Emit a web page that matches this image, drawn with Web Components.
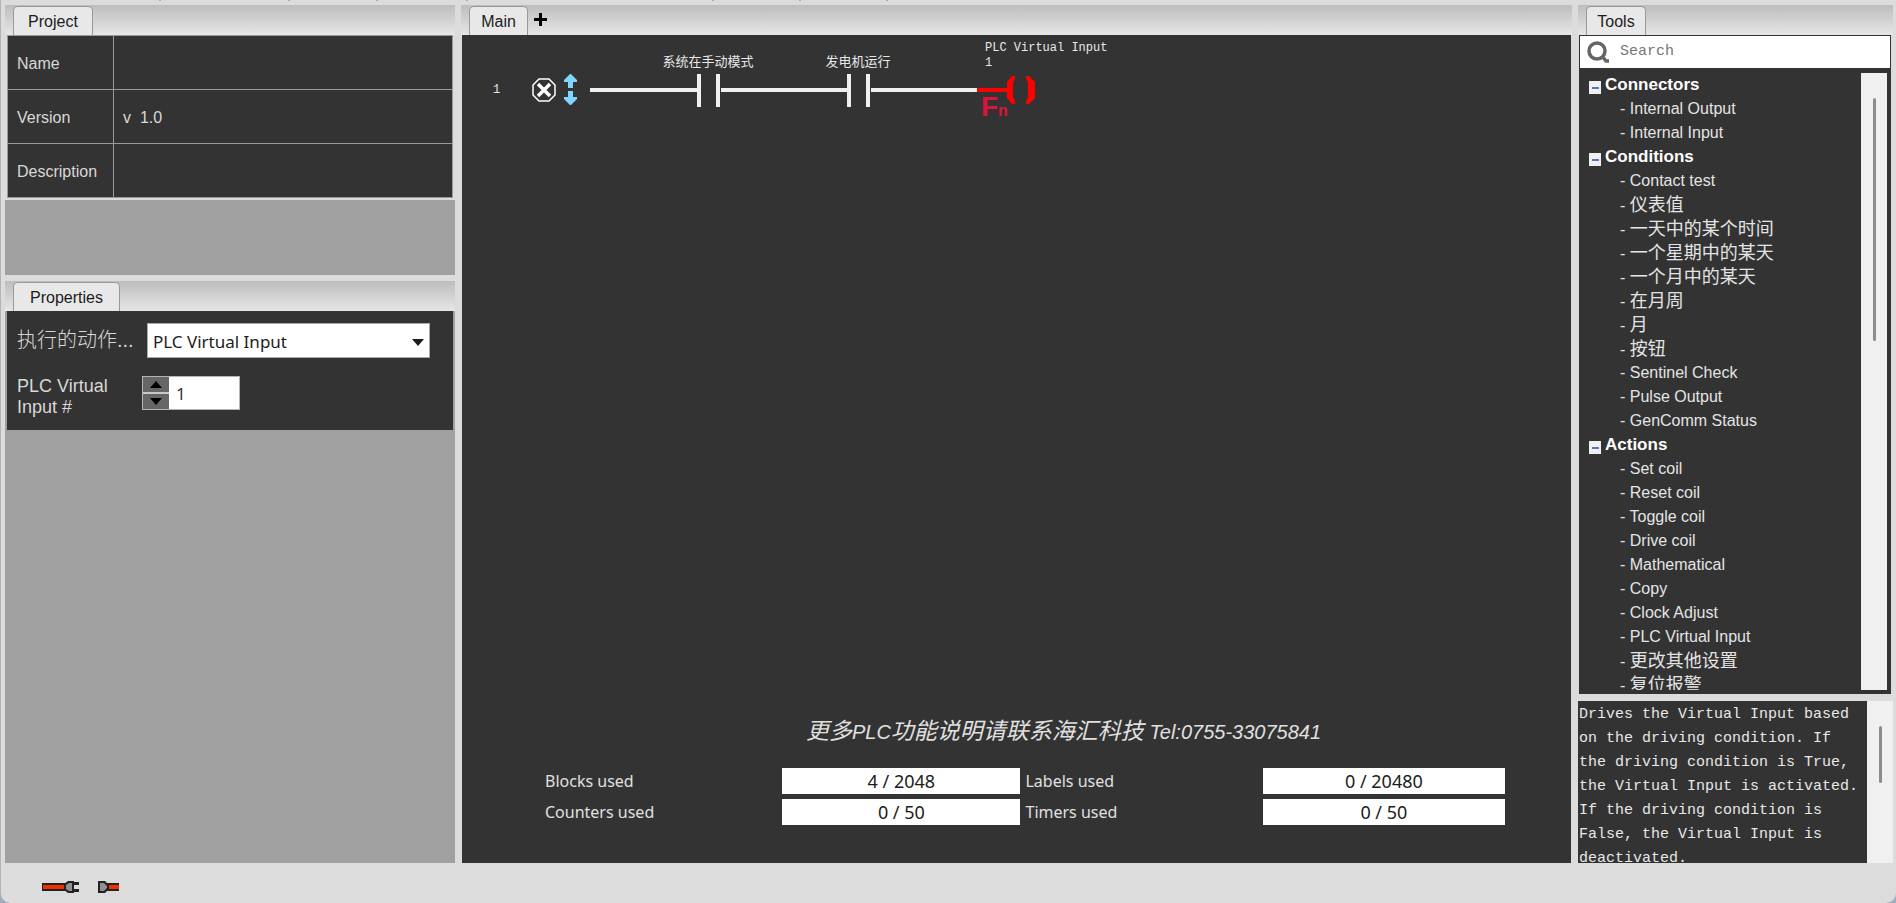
<!DOCTYPE html>
<html lang="zh-CN">
<head>
<meta charset="utf-8">
<title>PLC Editor</title>
<style>
  html, body {
    margin: 0;
    height: 100%;
    background: #9fadc0;
    font: 16px/24px "Liberation Sans", "Noto Sans CJK SC", sans-serif;
  }
</style>
</head>
<body>
<plc-app></plc-app>

<script>
class PlcPanel extends HTMLElement {
  constructor() {
    super();
    this.attachShadow({ mode: "open" });
    this.shadowRoot.innerHTML = `
      <style>
        :host {
          display: flex;
          flex-direction: column;
          min-width: 0;
          min-height: 0;
        }
        header {
          display: flex;
          flex: none;
          box-sizing: border-box;
          height: 30px;
          padding: 1px 8px 0;
          background: linear-gradient(#bdbdbd, #e6e6e6);
        }
        .tab {
          box-sizing: border-box;
          width: var(--tab-width, 80px);
          padding: 2px 0 0;
          border: 1px solid #999;
          border-bottom: 0;
          border-radius: 5px 5px 0 0;
          background: #e8e8e8;
          color: #1c1c1c;
          font: inherit;
        }
      </style>
      <header>
        <button class="tab" type="button">${this.getAttribute("label")}</button>
        <slot name="actions"></slot>
      </header>
      <slot></slot>
    `;
  }
}

class PlcProject extends HTMLElement {
  constructor() {
    super();
    this.attachShadow({ mode: "open" });
    this.shadowRoot.innerHTML = `
      <style>
        :host {
          display: block;
          padding: 0 2px 2px;
          background: #dcdcdc;
        }
        table {
          width: 100%;
          border-collapse: collapse;
          background: #333;
          color: #d8d8d8;
        }
        th, td {
          box-sizing: border-box;
          height: 54px;
          padding: 2px 9px 0;
          border: 1px solid #999;
          font-weight: normal;
          text-align: left;
          white-space: pre;
        }
        th { width: 106px; }
      </style>
      <table>
        <tr><th scope="row">Name</th><td></td></tr>
        <tr><th scope="row">Version</th><td>v  1.0</td></tr>
        <tr><th scope="row">Description</th><td></td></tr>
      </table>
    `;
  }
}

class PlcProperties extends HTMLElement {
  #input = null;

  constructor() {
    super();
    this.attachShadow({ mode: "open" });
    this.shadowRoot.innerHTML = `
      <style>
        :host {
          display: block;
          margin: 0 2px;
          padding: 12px 23px 12px 10px;
          background: #333;
          color: #d8d8d8;
          font-size: 18px;
          line-height: 21px;
        }
        .row {
          display: flex;
          align-items: center;
        }
        .row + .row { align-items: flex-start; margin-top: 18px; }
        .action { flex: none; width: 130px; font-size: 20px; font-weight: 300; }
        .number { flex: none; width: 100px; margin-right: 25px; }
        .select {
          display: grid;
          flex: 1;
          align-items: center;
          background: #fff;
          border: 1px solid #aaa;
        }
        select {
          grid-area: 1 / 1;
          height: 33px;
          padding: 2px 5px 0;
          border: 0;
          background: none;
          appearance: none;
          color: #1c1c1c;
          font: 17px "Noto Sans", sans-serif;
        }
        .select svg { grid-area: 1 / 1; justify-self: end; margin: 4px 5px 0 0; }
        .spinner {
          display: flex;
          border: 1px solid #b4b4b4;
          background: #c8c8c8;
        }
        .steps {
          display: grid;
          gap: 2px;
          width: 26px;
        }
        .steps button {
          display: grid;
          place-items: center;
          height: 15px;
          padding: 0;
          border: 0;
          background: #666;
        }
        input {
          box-sizing: border-box;
          width: 70px;
          height: 32px;
          padding: 0 7px;
          border: 0;
          background: #fff;
          color: #333;
          font: 17px "Noto Sans", sans-serif;
        }
      </style>
      <div class="row">
        <label class="action" for="action">执行的动作...</label>
        <div class="select">
          <select id="action"><option>PLC Virtual Input</option></select>
          <svg width="12" height="7"><path d="M0 0h12L6 7z" fill="#1c1c1c"/></svg>
        </div>
      </div>
      <div class="row">
        <label class="number" for="number">PLC Virtual Input #</label>
        <div class="spinner">
          <div class="steps">
            <button type="button" data-step="1" aria-label="Up"><svg width="12" height="7"><path d="M0 7h12L6 0z"/></svg></button>
            <button type="button" data-step="-1" aria-label="Down"><svg width="12" height="7"><path d="M0 0h12L6 7z"/></svg></button>
          </div>
          <input id="number" type="text" value="1">
        </div>
      </div>
    `;
  }

  connectedCallback() {
    this.#input = this.shadowRoot.querySelector("input");
    this.shadowRoot.querySelector(".steps").addEventListener("click", this.#step);
  }

  #step = (event) => {
    const button = event.target.closest("button");
    if (button) {
      this.#input.value = Number(this.#input.value) + Number(button.dataset.step);
    }
  };
}

class PlcRung extends HTMLElement {
  constructor() {
    super();
    this.attachShadow({ mode: "open" });
    this.shadowRoot.innerHTML = `
      <style>
        :host {
          display: flex;
          align-items: center;
          height: 109px;
          padding-left: 31px;
          color: #e8e8e8;
          font: 12px/16px "Liberation Mono", "Noto Sans CJK SC", monospace;
        }
        .index { width: 39px; }
        button {
          display: block;
          padding: 0;
          border: 0;
          background: none;
        }
        svg { display: block; }
        .move { display: grid; gap: 3px; margin: 0 13px 0 8px; }
        text { fill: #e8e8e8; }
        .cjk { font-size: 13px; }
        .fn { fill: #dc143c; font: bold 28px "Liberation Sans", sans-serif; }
        .fn .small { font-size: 16px; }
      </style>
      <span class="index">1</span>
      <button type="button" aria-label="Delete">
        <svg width="24" height="24" fill="none" stroke="#fff">
          <path d="M7 1h10l6 6v10l-6 6H7l-6-6V7z" stroke-width="1.5"/>
          <path d="M6 6l12 12M18 6L6 18" stroke-width="3.5"/>
        </svg>
      </button>
      <div class="move">
        <button type="button" aria-label="Move up"><svg width="13" height="14"><path d="M6 0h1l6 6v2H9v6H4V8H0V6z" fill="#7fd6ff"/></svg></button>
        <button type="button" aria-label="Move down"><svg width="13" height="14"><path d="M6 14h1l6-6V6H9V0H4v6H0v2z" fill="#7fd6ff"/></svg></button>
      </div>
      <svg width="540" height="109">
        <g fill="#f0f0f0">
          <path d="M0 53h107v4H0zM131 53h126v4H131zM281 53h106v4H281z"/>
          <path d="M107 39h4v33h-4zM126 39h4v33h-4zM257 39h4v33h-4zM276 39h4v33h-4z"/>
        </g>
        <path d="M387 53h30v-6l5-6h3v3l-2 4v14l2 4v3h-3l-5-6v-6h-30zM436 41h3l6 6v16l-6 6h-3v-3l2-4V48l-2-4z" fill="#f00"/>
        <text class="cjk" x="118" y="31" text-anchor="middle">系统在手动模式</text>
        <text class="cjk" x="268" y="31" text-anchor="middle">发电机运行</text>
        <text x="395" y="16">PLC Virtual Input</text>
        <text x="395" y="31">1</text>
        <text class="fn" x="391" y="81">F<tspan class="small">n</tspan></text>
      </svg>
    `;
  }
}

class PlcUsage extends HTMLElement {
  constructor() {
    super();
    this.attachShadow({ mode: "open" });
    this.shadowRoot.innerHTML = `
      <style>
        :host {
          display: grid;
          grid-template-columns: 237fr 238fr 242fr 242fr;
          row-gap: 5px;
          align-items: center;
          padding: 0 66px 38px 83px;
          color: #e0e0e0;
          font: 16px/26px "Noto Sans", sans-serif;
        }
        output {
          background: #fff;
          color: #1c1c1c;
          font-size: 18px;
          text-align: center;
        }
        .second { padding-left: 5px; }
      </style>
      <label for="blocks">Blocks used</label><output id="blocks">4 / 2048</output>
      <label for="labels" class="second">Labels used</label><output id="labels">0 / 20480</output>
      <label for="counters">Counters used</label><output id="counters">0 / 50</output>
      <label for="timers" class="second">Timers used</label><output id="timers">0 / 50</output>
    `;
  }
}

class PlcCanvas extends HTMLElement {
  constructor() {
    super();
    this.attachShadow({ mode: "open" });
    this.shadowRoot.innerHTML = `
      <style>
        :host {
          display: flex;
          flex: 1;
          flex-direction: column;
          margin: 0 1px;
          background: #333;
        }
        p {
          margin: auto 0 20px;
          padding-left: 94px;
          color: #e0e0e0;
          font-size: 20px;
          font-style: italic;
          line-height: 32px;
          text-align: center;
        }
        .cjk { font-size: 23px; }
      </style>
      <plc-rung></plc-rung>
      <p><span class="cjk">更多</span>PLC<span class="cjk">功能说明请联系海汇科技</span> Tel:0755-33075841</p>
      <plc-usage></plc-usage>
    `;
  }
}

class PlcScrollbar extends HTMLElement {
  constructor() {
    super();
    this.attachShadow({ mode: "open" });
    this.shadowRoot.innerHTML = `
      <style>
        :host {
          display: block;
          flex: none;
          box-sizing: border-box;
          width: 26px;
          padding-top: 25px;
          background: #f0f0f0;
        }
        div {
          width: 3px;
          height: var(--thumb, 41%);
          margin: 0 auto;
          border-radius: 2px;
          background: #8c8c8c;
        }
      </style>
      <div></div>
    `;
  }
}

const TOOLS = {
  Connectors: ["Internal Output", "Internal Input"],
  Conditions: [
    "Contact test", "仪表值", "一天中的某个时间", "一个星期中的某天", "一个月中的某天",
    "在月周", "月", "按钮", "Sentinel Check", "Pulse Output", "GenComm Status",
  ],
  Actions: [
    "Set coil", "Reset coil", "Toggle coil", "Drive coil", "Mathematical", "Copy",
    "Clock Adjust", "PLC Virtual Input", "更改其他设置", "复位报警",
  ],
};

class PlcTools extends HTMLElement {
  constructor() {
    super();
    this.attachShadow({ mode: "open" });
    this.shadowRoot.innerHTML = `
      <style>
        :host {
          display: flex;
          flex: 1;
          flex-direction: column;
          min-height: 0;
          margin: 0 2px 0 1px;
          padding: 1px 1px 4px;
          background: #333;
          color: #e4e4e4;
        }
        .search {
          display: flex;
          flex: none;
          align-items: center;
          gap: 9px;
          height: 32px;
          padding-left: 7px;
          background: #fff;
        }
        input {
          flex: 1;
          min-width: 0;
          height: 24px;
          margin-bottom: 2px;
          padding: 0;
          border: 0;
          outline: 0;
          font: 15px "Liberation Mono", monospace;
        }
        input::placeholder { color: #777; }
        .body {
          display: flex;
          flex: 1;
          min-height: 0;
          margin: 5px 3px 0 9px;
        }
        .tree { flex: 1; overflow: hidden; }
        summary {
          display: flex;
          align-items: center;
          gap: 4px;
          color: #fff;
          font-size: 17px;
          font-weight: bold;
          list-style: none;
        }
        summary svg { margin-top: 4px; }
        ul { margin: 0; padding: 0 0 0 31px; list-style: none; }
        li { height: 24px; white-space: nowrap; }
        .cjk { font-size: 18px; }
      </style>
      <div class="search">
        <svg width="24" height="22" fill="none" stroke="#666">
          <circle cx="10" cy="10" r="8" stroke-width="3.5"/>
          <path d="M15 15l4 5h3" stroke-width="3.5"/>
        </svg>
        <input type="text" placeholder="Search" aria-label="Search">
      </div>
      <div class="body">
        <div class="tree">${Object.entries(TOOLS).map(this.#group).join("")}</div>
        <plc-scrollbar></plc-scrollbar>
      </div>
    `;
  }

  #group([name, items]) {
    const rows = items.map((item) => {
      const isCjk = item.charCodeAt(0) > 255;
      return `<li>- <span class="${isCjk ? "cjk" : ""}">${item}</span></li>`;
    });
    return `
      <details open>
        <summary>
          <svg width="12" height="13"><path d="M0 0h12v13H0z" fill="#f0f0f0"/><path d="M3 6h7v2H3z" fill="#5a74b8"/></svg>
          ${name}
        </summary>
        <ul>${rows.join("")}</ul>
      </details>`;
  }
}

class PlcHelp extends HTMLElement {
  constructor() {
    super();
    this.attachShadow({ mode: "open" });
    this.shadowRoot.innerHTML = `
      <style>
        :host {
          display: flex;
          height: 162px;
          background: #333;
          color: #e8e8e8;
          font: 15px/24px "Liberation Mono", monospace;
        }
        p { flex: 1; margin: 0; padding: 2px 5px 0 1px; overflow: hidden; }
      </style>
      <p><slot></slot></p>
      <plc-scrollbar></plc-scrollbar>
    `;
  }
}

class PlcStatus extends HTMLElement {
  constructor() {
    super();
    this.attachShadow({ mode: "open" });
    this.shadowRoot.innerHTML = `
      <style>
        :host {
          display: flex;
          align-items: center;
          box-sizing: border-box;
          gap: 19px;
          height: 40px;
          padding: 8px 41px 0;
        }
      </style>
      <svg width="37" height="14">
        <path d="M0 3h23v8H0z" fill="#222"/><path d="M1 5h22v4H1z" fill="#f03000"/>
        <path d="M22 4l4-3h6v12h-6l-4-3z" fill="#222"/><path d="M24 5l3-2h3v8h-3l-3-2z" fill="#909090"/>
        <path d="M32 2h5v3h-5zM32 9h5v3h-5z" fill="#222"/>
      </svg>
      <svg width="21" height="14">
        <path d="M9 3h12v8H9z" fill="#222"/><path d="M10 5h11v4H10z" fill="#f03000"/>
        <path d="M0 1h7l4 4v4l-4 4H0z" fill="#222"/><path d="M2 3h4l3 3v2l-3 3H2z" fill="#909090"/>
      </svg>
    `;
  }
}

class PlcApp extends HTMLElement {
  constructor() {
    super();
    this.attachShadow({ mode: "open" });
    this.shadowRoot.innerHTML = `
      <style>
        :host {
          display: flex;
          flex-direction: column;
          box-sizing: border-box;
          height: 100vh;
          border-left: 1px solid #b4b4b4;
          border-radius: 0 0 10px 10px;
          background: #dcdcdc;
          overflow: hidden;
        }
        .ticks { display: block; flex: none; height: 5px; }
        main {
          display: grid;
          flex: 1;
          grid-template-columns: 450px 1fr 315px;
          gap: 6px;
          min-height: 0;
          padding: 0 3px 0 4px;
        }
        .side {
          display: flex;
          flex-direction: column;
          min-height: 0;
        }
        .left { gap: 6px; }
        .right { gap: 7px; }
        .project { height: 270px; background: #a0a0a0; }
        .properties { flex: 1; background: #a0a0a0; --tab-width: 107px; }
        .main { --tab-width: 59px; }
        .tools { flex: 1; --tab-width: 60px; }
        .help { --thumb: 57px; }
        .add {
          padding: 0 6px;
          border: 0;
          background: none;
        }
      </style>
      <svg class="ticks" width="900"><path d="M158 0h2v1h-2zM287 0h2v1h-2zM375 0h2v1h-2zM465 0h2v1h-2zM711 0h2v1h-2zM798 0h2v1h-2zM885 0h2v1h-2z" fill="#aaa"/></svg>
      <main>
        <div class="side left">
          <plc-panel class="project" label="Project"><plc-project></plc-project></plc-panel>
          <plc-panel class="properties" label="Properties"><plc-properties></plc-properties></plc-panel>
        </div>
        <plc-panel class="main" label="Main">
          <button class="add" slot="actions" type="button" aria-label="Add"><svg width="13" height="13"><path d="M5 0h3v5h5v3H8v5H5V8H0V5h5z"/></svg></button>
          <plc-canvas></plc-canvas>
        </plc-panel>
        <div class="side right">
          <plc-panel class="tools" label="Tools"><plc-tools></plc-tools></plc-panel>
          <plc-help class="help">Drives the Virtual Input based on the driving condition. If the driving condition is True, the Virtual Input is activated. If the driving condition is False, the Virtual Input is deactivated.</plc-help>
        </div>
      </main>
      <plc-status></plc-status>
    `;
  }
}

customElements.define("plc-panel", PlcPanel);
customElements.define("plc-project", PlcProject);
customElements.define("plc-properties", PlcProperties);
customElements.define("plc-rung", PlcRung);
customElements.define("plc-usage", PlcUsage);
customElements.define("plc-canvas", PlcCanvas);
customElements.define("plc-scrollbar", PlcScrollbar);
customElements.define("plc-tools", PlcTools);
customElements.define("plc-help", PlcHelp);
customElements.define("plc-status", PlcStatus);
customElements.define("plc-app", PlcApp);
</script>
</body>
</html>
